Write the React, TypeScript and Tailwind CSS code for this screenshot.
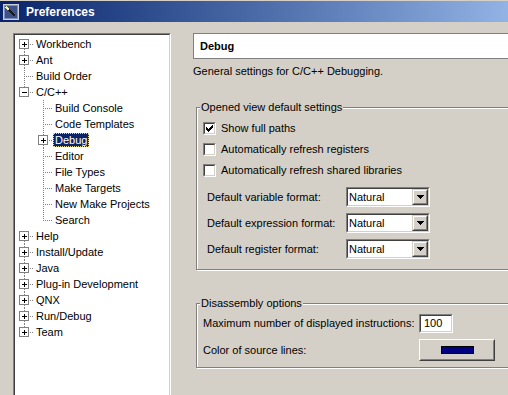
import React from 'react';

// Types
type Box = 'plus' | 'minus' | null;

type Cell = {
    top: boolean;
    bottom: boolean;
    branch: boolean;
    box: Box;
};

type TreeRow = {
    label: string;
    cells: (Cell | null)[];
    selected?: boolean;
};

const LINE = '#808080';

// Dotted tree connector drawn pixel by pixel (1 on, 1 off)
const TreeCell = ({ cell }: { cell: Cell | null }) => {
    const dots: { x: number; y: number }[] = [];
    if (cell) {
        const hasBox = cell.box !== null;
        if (cell.top) {
            for (let y = 0; y < (hasBox ? 4 : 8); y += 2) dots.push({ x: 9, y });
        }
        if (cell.bottom) {
            for (let y = hasBox ? 13 : 8; y < 16; y += 2) dots.push({ x: 9, y });
        }
        if (cell.branch || hasBox) {
            for (let x = hasBox ? 15 : 9; x < 19; x += 2) dots.push({ x, y: 8 });
        }
    }

    return (
        <svg width={19} height={16} className="shrink-0" shapeRendering="crispEdges">
            {dots.map((d, i) => (
                <rect key={i} x={d.x} y={d.y} width={1} height={1} fill={LINE} />
            ))}
            {cell && cell.box && (
                <g>
                    <rect x={4.5} y={3.5} width={9} height={9} fill="#fff" stroke="#808080" />
                    <rect x={7} y={8} width={5} height={1} fill="#000" />
                    {cell.box === 'plus' && <rect x={9} y={6} width={1} height={5} fill="#000" />}
                </g>
            )}
        </svg>
    );
};

const top = (box: Box, t: boolean, b: boolean): Cell => ({ top: t, bottom: b, branch: true, box });

const treeRows: TreeRow[] = [
    { label: 'Workbench', cells: [top('plus', false, true)] },
    { label: 'Ant', cells: [top('plus', true, true)] },
    { label: 'Build Order', cells: [top(null, true, true)] },
    { label: 'C/C++', cells: [top('minus', true, false)] },
    { label: 'Build Console', cells: [null, top(null, true, true)] },
    { label: 'Code Templates', cells: [null, top(null, true, true)] },
    { label: 'Debug', cells: [null, top('plus', true, true)], selected: true },
    { label: 'Editor', cells: [null, top(null, true, true)] },
    { label: 'File Types', cells: [null, top(null, true, true)] },
    { label: 'Make Targets', cells: [null, top(null, true, true)] },
    { label: 'New Make Projects', cells: [null, top(null, true, true)] },
    { label: 'Search', cells: [null, top(null, true, false)] },
    { label: 'Help', cells: [top('plus', false, true)] },
    { label: 'Install/Update', cells: [top('plus', true, true)] },
    { label: 'Java', cells: [top('plus', true, true)] },
    { label: 'Plug-in Development', cells: [top('plus', true, true)] },
    { label: 'QNX', cells: [top('plus', true, true)] },
    { label: 'Run/Debug', cells: [top('plus', true, true)] },
    { label: 'Team', cells: [top('plus', true, false)] },
];

// Sunken 2px border used by inputs, combos, checkboxes
const Sunken = ({ className, children }: { className: string; children?: React.ReactNode }) => (
    <div className={`border border-t-[#808080] border-l-[#808080] border-r-white border-b-white ${className}`}>
        <div className="w-full h-full border border-t-[#404040] border-l-[#404040] border-r-[#d4d0c8] border-b-[#d4d0c8] bg-white flex items-center">
            {children}
        </div>
    </div>
);

const Checkbox = ({ checked }: { checked?: boolean }) => (
    <Sunken className="w-[13px] h-[13px] shrink-0">
        {checked && (
            <svg width={7} height={7} className="ml-[1px]" shapeRendering="crispEdges">
                {[
                    [0, 2], [1, 3], [2, 4], [3, 3], [4, 2], [5, 1], [6, 0],
                ].map(([x, y]) => (
                    <rect key={x} x={x} y={y} width={1} height={3} fill="#000" />
                ))}
            </svg>
        )}
    </Sunken>
);

const Combo = () => (
    <Sunken className="w-[84px] h-[20px]">
        <span className="flex-1 pl-[1px] leading-[13px]">Natural</span>
        <div className="w-[16px] h-[16px] border border-t-[#d4d0c8] border-l-[#d4d0c8] border-r-[#404040] border-b-[#404040]">
            <div className="w-full h-full border border-t-white border-l-white border-r-[#808080] border-b-[#808080] bg-[#d4d0c8] flex items-center justify-center">
                <svg width={7} height={4} shapeRendering="crispEdges">
                    <polygon points="0,0 7,0 3.5,4" fill="#000" />
                </svg>
            </div>
        </div>
    </Sunken>
);

const Group = ({ title, children }: { title: string; children: React.ReactNode }) => (
    <fieldset className="ml-[3px] border border-[#808080] shadow-[inset_1px_1px_0_#fff,1px_1px_0_#fff] p-0">
        <legend className="ml-[3px] px-[1px] leading-[13px] bg-[#d4d0c8]">{title}</legend>
        {children}
    </fieldset>
);

const App = () => {
    return (
        <div className="w-[508px] h-[395px] overflow-hidden bg-[#d4d0c8] text-[11px] text-black font-['Liberation_Sans',Arial,sans-serif] flex flex-col">
            {/* Title bar */}
            <div className="mt-px h-[21px] shrink-0 flex items-center pl-[3px] bg-linear-to-r from-[#0a246a] to-[#93b3e5]">
                <svg width={16} height={16} shapeRendering="crispEdges">
                    <rect x={0.5} y={0.5} width={15} height={15} fill="#4a5f94" stroke="#c8cdd8" />
                    <rect x={1.5} y={1.5} width={13} height={13} fill="#3d5289" stroke="#7f8fb8" />
                    <line x1={4} y1={4} x2={12} y2={12} stroke="#1a1a1a" strokeWidth={2} />
                    <line x1={3} y1={3} x2={6} y2={6} stroke="#f6f0b0" strokeWidth={2} />
                </svg>
                <span className="ml-[7px] text-white font-bold text-[12px] leading-none">Preferences</span>
            </div>

            {/* Body */}
            <div className="flex pl-[13px] pt-[11px] gap-[22px]">
                {/* Tree */}
                <div className="w-[158px] h-[420px] shrink-0 border border-t-[#808080] border-l-[#808080] border-r-white border-b-white">
                    <div className="w-full h-full border border-t-[#404040] border-l-[#404040] border-r-[#d4d0c8] border-b-[#d4d0c8] bg-white pt-px">
                        {treeRows.map((row) => (
                            <div key={row.label} className="flex items-center h-[16px]">
                                {row.cells.map((c, i) => (
                                    <TreeCell key={i} cell={c} />
                                ))}
                                <span
                                    className={`h-[14px] flex items-center px-px border whitespace-nowrap ${
                                        row.selected
                                            ? 'bg-[#0a246a] text-white border-dotted border-[#e8d890]'
                                            : 'border-transparent'
                                    }`}
                                >
                                    {row.label}
                                </span>
                            </div>
                        ))}
                    </div>
                </div>

                {/* Page */}
                <div className="w-[340px] shrink-0 flex flex-col">
                    <div className="h-[26px] border border-[#808080] bg-white flex items-center pl-[6px] font-bold">
                        Debug
                    </div>
                    <p className="mt-[6px] leading-[13px]">General settings for C/C++ Debugging.</p>

                    <div className="mt-[23px]">
                        <Group title="Opened view default settings">
                            <div className="pl-[6px] pt-[8px] pb-[10px]">
                                <div className="flex flex-col gap-[8px]">
                                    <div className="flex items-center gap-[5px] h-[13px]">
                                        <Checkbox checked />
                                        <span>Show full paths</span>
                                    </div>
                                    <div className="flex items-center gap-[5px] h-[13px]">
                                        <Checkbox />
                                        <span>Automatically refresh registers</span>
                                    </div>
                                    <div className="flex items-center gap-[5px] h-[13px]">
                                        <Checkbox />
                                        <span>Automatically refresh shared libraries</span>
                                    </div>
                                </div>
                                <div className="mt-[10px] flex flex-col gap-[6px] pl-[4px]">
                                    {['Default variable format:', 'Default expression format:', 'Default register format:'].map(
                                        (label) => (
                                            <div key={label} className="flex items-center h-[20px]">
                                                <span className="w-[139px]">{label}</span>
                                                <Combo />
                                            </div>
                                        )
                                    )}
                                </div>
                            </div>
                        </Group>
                    </div>

                    <div className="mt-[27px]">
                        <Group title="Disassembly options">
                            <div className="pl-[6px] pt-[4px] pb-[6px]">
                                <div className="flex items-center h-[19px]">
                                    <span className="w-[216px]">Maximum number of displayed instructions:</span>
                                    <Sunken className="w-[34px] h-[19px]">
                                        <span className="pl-[3px] leading-[13px]">100</span>
                                    </Sunken>
                                </div>
                                <div className="mt-[6px] flex items-center h-[22px]">
                                    <span className="w-[216px]">Color of source lines:</span>
                                    <div className="w-[76px] h-[22px] border border-t-white border-l-white border-r-[#404040] border-b-[#404040]">
                                        <div className="w-full h-full border border-t-[#d4d0c8] border-l-[#d4d0c8] border-r-[#808080] border-b-[#808080] flex items-center justify-center">
                                            <div className="w-[33px] h-[8px] bg-[#000080] border border-black" />
                                        </div>
                                    </div>
                                </div>
                            </div>
                        </Group>
                    </div>
                </div>
            </div>
        </div>
    );
};

export default App;
